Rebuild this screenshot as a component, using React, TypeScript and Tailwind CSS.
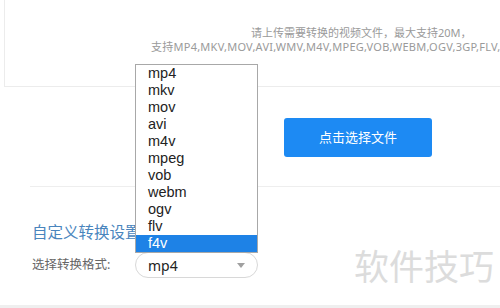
import React from "react";

const items = ["mp4", "mkv", "mov", "avi", "m4v", "mpeg", "vob", "webm", "ogv", "flv", "f4v"];

export default function App() {
  return (
    <div
      className="relative w-[500px] h-[308px] overflow-hidden bg-white"
      style={{ fontFamily: '"Noto Sans", "Noto Sans CJK SC", sans-serif' }}
    >
      <div className="ml-[4px] h-[87px] border-l border-b border-[#ececec] pt-[26px] text-[11px] leading-[14px] text-[#9a9a9a] whitespace-nowrap">
        <div className="pl-[246px]">请上传需要转换的视频文件，最大支持20M，</div>
        <div className="pl-[146px] tracking-[0.25px]">支持MP4,MKV,MOV,AVI,WMV,M4V,MPEG,VOB,WEBM,OGV,3GP,FLV,</div>
      </div>

      <div className="mt-[31px] ml-[284px] flex h-[39px] w-[148px] items-center justify-center rounded-[3px] bg-[#1d8af3] text-[13px] text-white">
        点击选择文件
      </div>

      <div className="mt-[29px] ml-[30px] h-px bg-[#eeeeee]" />

      <div className="mt-[35px] ml-[32px] text-[15.5px] leading-[20px] text-[#4a85bd] whitespace-nowrap">
        自定义转换设置
      </div>

      <div className="mt-[10px] flex items-center">
        <div className="ml-[32px] w-[103px] text-[12.5px] text-[#666] whitespace-nowrap">选择转换格式:</div>
        <div className="flex h-[26px] w-[123px] items-center justify-between rounded-full border border-[#d8d8d8] pl-[12px] pr-[12px] text-[14px] text-[#222]">
          <span>mp4</span>
          <svg width="8" height="5" viewBox="0 0 8 5">
            <path d="M0 0 L8 0 L4 5 Z" fill="#a0a0a0" />
          </svg>
        </div>
      </div>

      <div className="mt-[27px] h-[3px] bg-[#efefef]" />

      <div
        className="absolute left-[135px] top-[64px] w-[123px] border border-[#a8a8a8] bg-white"
        style={{ fontFamily: '"Liberation Sans", Arial, sans-serif' }}
      >
        {items.map((it) => (
          <div
            key={it}
            className={
              it === "f4v"
                ? "h-[17px] pl-[12px] text-[14.5px] leading-[17px] bg-[#1e82e6] text-white"
                : "h-[17px] pl-[12px] text-[14.5px] leading-[17px] text-[#222]"
            }
          >
            {it}
          </div>
        ))}
      </div>

      <div className="pointer-events-none absolute left-[354px] top-[244px] text-[35px] leading-[45px] text-[#dcdcdc] whitespace-nowrap">
        软件技巧
      </div>
    </div>
  );
}
